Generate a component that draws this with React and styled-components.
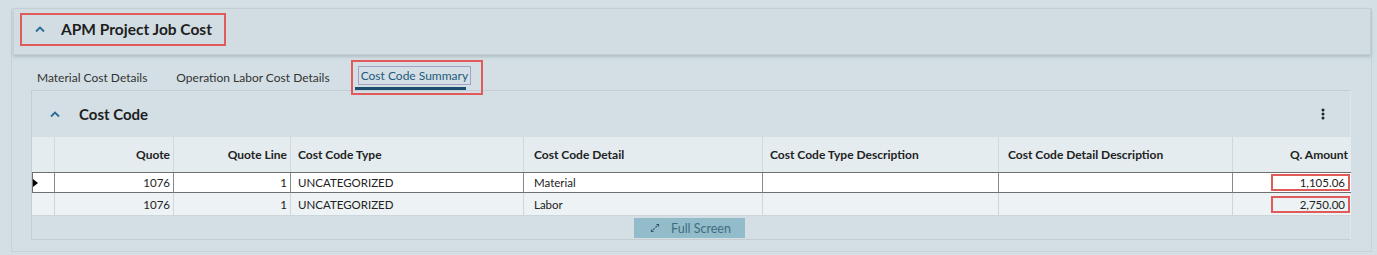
import React from "react";
import styled, { createGlobalStyle } from "styled-components";

const GlobalStyle = createGlobalStyle`
  html, body {
    margin: 0;
    padding: 0;
    background: #d3dfe4;
    font-family: Lato, "Noto Sans", sans-serif;
    color: #222;
  }
`;

const Page = styled.div`
  width: 1377px;
  height: 255px;
  padding-top: 8px;
  box-sizing: border-box;
  overflow: hidden;
`;

const Outer = styled.div`
  margin-left: 11px;
  width: 1361px;
  height: 244px;
  box-sizing: border-box;
  border: 1px solid #c6d2d8;
  border-top: none;
  display: flex;
  flex-direction: column;
`;

const HeaderBar = styled.div`
  height: 47px;
  box-sizing: border-box;
  margin-left: 1px;
  background: #d1dde2;
  border: 1px solid #c3cfd5;
  box-shadow: 0 2px 3px rgba(60, 80, 90, 0.22);
  display: flex;
  align-items: flex-start;
  padding: 4px 0 0 6px;
`;

const Marked = styled.div`
  display: flex;
  align-items: center;
  gap: ${(p) => p.$gap || 0}px;
  height: ${(p) => p.$h}px;
  padding: ${(p) => p.$pad};
  box-sizing: border-box;
  border: 2px solid #e25b5b;
  position: relative;
  z-index: 2;
`;

const TabMark = styled(Marked)`
  margin: 5px 0 0 -8px;
  align-items: flex-start;
`;

const Title = styled.span`
  font-weight: 700;
  font-size: ${(p) => p.$size || 15}px;
  color: #1e1e1e;
`;

const Chevron = ({ color = "#2c6b95" }) => (
  <svg width="12" height="8" viewBox="0 0 12 8">
    <path d="M2 6.5 L6 2.5 L10 6.5" fill="none" stroke={color} strokeWidth="1.8" />
  </svg>
);

const Tabs = styled.div`
  display: flex;
  align-items: flex-start;
  height: 35px;
  padding-left: 25px;
`;

const Tab = styled.div`
  font-size: 12px;
  color: #333;
  margin-right: 29px;
  padding-top: 15px;
`;

const ActiveTab = styled.div`
  font-size: 12px;
  color: #1e5a80;
  padding: 1px 2px 1px;
  outline: 1px solid #a9a0c8;
  position: relative;
  &::after {
    content: "";
    position: absolute;
    left: -4px;
    right: 4px;
    bottom: -6px;
    height: 3px;
    background: #1b4d6e;
  }
`;

const Inner = styled.div`
  margin-left: 19px;
  width: 1320px;
  height: 150px;
  box-sizing: border-box;
  border-top: 1px solid #c5cdd1;
  border-left: 1px solid #c5cdd1;
  border-right: 1px solid #dde6ea;
  border-bottom: 1px solid #c5cdd1;
  display: flex;
  flex-direction: column;
`;

const InnerHead = styled.div`
  height: 46px;
  display: flex;
  align-items: center;
  padding: 0 25px 0 17px;
  gap: 18px;
`;

const Spacer = styled.div`
  flex: 1;
`;

const Kebab = () => (
  <svg width="4" height="12" viewBox="0 0 4 12">
    <circle cx="2" cy="2" r="1.5" fill="#222" />
    <circle cx="2" cy="6" r="1.5" fill="#222" />
    <circle cx="2" cy="10" r="1.5" fill="#222" />
  </svg>
);

const Grid = styled.div`
  display: grid;
  grid-template-columns: 23px 119px 117px 233px 239px 236px 234px 118px;
`;

const HeadCell = styled.div`
  height: 35px;
  background: #e4ecef;
  border-right: ${(p) => (p.$last ? "none" : "1px solid #cfd9dd")};
  box-sizing: border-box;
  display: flex;
  align-items: center;
  justify-content: ${(p) => (p.$right ? "flex-end" : "flex-start")};
  padding: 0 ${(p) => (p.$right ? 3 : 0)}px 0 ${(p) => (p.$right ? 0 : p.$pl ?? 7)}px;
  font-size: 12px;
  font-weight: 700;
  color: #222;
`;

const Cell = styled.div`
  height: ${(p) => (p.$current ? 21 : 23)}px;
  box-sizing: border-box;
  background: ${(p) => (p.$current ? "#fff" : "#edf3f5")};
  border-right: ${(p) =>
    p.$last ? "none" : `1px solid ${p.$current ? "#8a8a8a" : "#cdd6da"}`};
  border-left: ${(p) => (p.$lead && p.$current ? "1px solid #6f6f6f" : "none")};
  border-top: ${(p) => (p.$current ? "1px solid #6f6f6f" : "none")};
  border-bottom: ${(p) => (p.$current ? "1px solid #6f6f6f" : "1px solid #cdd6da")};
  display: flex;
  align-items: center;
  justify-content: ${(p) => (p.$right ? "flex-end" : "flex-start")};
  padding: 0 ${(p) => (p.$right ? (p.$last ? 1 : 3) : 0)}px 0
    ${(p) => (p.$right ? 0 : p.$pl ?? 7)}px;
  font-size: 11.5px;
  color: #222;
`;

const AmountBox = styled.span`
  display: inline-flex;
  justify-content: flex-end;
  align-items: center;
  width: 79px;
  height: 17px;
  box-sizing: border-box;
  border: 2px solid #e05a5a;
  padding-right: 3px;
`;

const Indicator = styled.span`
  width: 0;
  height: 0;
  border-top: 4px solid transparent;
  border-bottom: 4px solid transparent;
  border-left: 5px solid #000;
`;

const Footer = styled.div`
  flex: 1;
  display: flex;
  justify-content: center;
  align-items: flex-start;
  padding: 2px 3px 0 0;
`;

const FullScreen = styled.button`
  width: 111px;
  height: 20px;
  border: none;
  background: #93bccb;
  color: #3f6d80;
  font-family: inherit;
  font-size: 12.5px;
  display: flex;
  align-items: center;
  justify-content: center;
  gap: 11px;
  padding: 0 0 0 2px;
`;

const ExpandIcon = () => (
  <svg width="10" height="10" viewBox="0 0 11 11">
    <path d="M6.5 1 H10 V4.5 Z" fill="#2e5668" />
    <path d="M7.5 3.5 L6 5" stroke="#2e5668" strokeWidth="1.3" />
    <path d="M1 6.5 V10 H4.5 Z" fill="#2e5668" />
    <path d="M3.5 7.5 L5 6" stroke="#2e5668" strokeWidth="1.3" />
  </svg>
);

const rows = [
  { quote: "1076", line: "1", type: "UNCATEGORIZED", detail: "Material", amount: "1,105.06" },
  { quote: "1076", line: "1", type: "UNCATEGORIZED", detail: "Labor", amount: "2,750.00" },
];

export default function App() {
  return (
    <Page>
      <GlobalStyle />
      <Outer>
        <HeaderBar>
          <Marked $h={33} $pad="0 12px 2px 12px" $gap={15}>
            <Chevron />
            <Title $size={15.5}>APM Project Job Cost</Title>
          </Marked>
        </HeaderBar>
        <Tabs>
          <Tab>Material Cost Details</Tab>
          <Tab>Operation Labor Cost Details</Tab>
          <TabMark $h={35} $pad="5px 11px 0 6px">
            <ActiveTab>Cost Code Summary</ActiveTab>
          </TabMark>
        </Tabs>
        <Inner>
          <InnerHead>
            <Chevron />
            <Title>Cost Code</Title>
            <Spacer />
            <Kebab />
          </InnerHead>
          <Grid>
            <HeadCell $pl={0} />
            <HeadCell $right>Quote</HeadCell>
            <HeadCell $right>Quote Line</HeadCell>
            <HeadCell>Cost Code Type</HeadCell>
            <HeadCell $pl={10}>Cost Code Detail</HeadCell>
            <HeadCell>Cost Code Type Description</HeadCell>
            <HeadCell $pl={9}>Cost Code Detail Description</HeadCell>
            <HeadCell $right $last>Q. Amount</HeadCell>
            {rows.map((r, i) => {
              const cur = i === 0;
              return (
                <React.Fragment key={i}>
                  <Cell $current={cur} $lead $pl={0}>{cur && <Indicator />}</Cell>
                  <Cell $current={cur} $right>{r.quote}</Cell>
                  <Cell $current={cur} $right>{r.line}</Cell>
                  <Cell $current={cur}>{r.type}</Cell>
                  <Cell $current={cur} $pl={10}>{r.detail}</Cell>
                  <Cell $current={cur} />
                  <Cell $current={cur} />
                  <Cell $current={cur} $right $last>
                    <AmountBox>{r.amount}</AmountBox>
                  </Cell>
                </React.Fragment>
              );
            })}
          </Grid>
          <Footer>
            <FullScreen>
              <ExpandIcon />
              Full Screen
            </FullScreen>
          </Footer>
        </Inner>
      </Outer>
    </Page>
  );
}
